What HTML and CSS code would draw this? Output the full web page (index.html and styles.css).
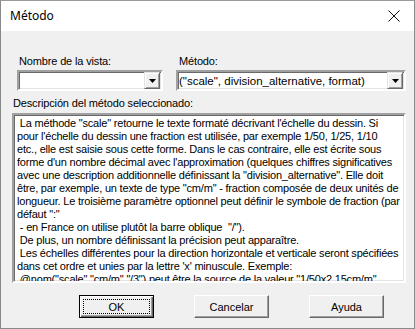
FILE: index.html
```html
<!DOCTYPE html>
<html lang="es">
<head>
<meta charset="utf-8">
<title>Método</title>
<link rel="stylesheet" href="styles.css">
</head>
<body>
<div class="window">
  <div class="titlebar">
    <span class="title">Método</span>
    <svg class="close" width="12" height="12" viewBox="0 0 12 12"><path d="M0.5 0.5 L11.5 11.5 M11.5 0.5 L0.5 11.5" stroke="#111" stroke-width="1" fill="none"/></svg>
  </div>
  <div class="content">
    <div class="fields">
      <div class="field field-view">
        <div class="label">Nombre de la vista:</div>
        <div class="combo">
          <span class="combo-text"></span>
          <span class="drop"><svg width="7" height="4" viewBox="0 0 7 4"><path d="M0 0 H7 L3.5 4 Z" fill="#000"/></svg></span>
        </div>
      </div>
      <div class="field field-method">
        <div class="label">Método:</div>
        <div class="combo">
          <span class="combo-text">("scale", division_alternative, format)</span>
          <span class="drop"><svg width="7" height="4" viewBox="0 0 7 4"><path d="M0 0 H7 L3.5 4 Z" fill="#000"/></svg></span>
        </div>
      </div>
    </div>
    <div class="label desc-label">Descripción del método seleccionado:</div>
    <div class="textbox"><div class="text"> La méthode "scale" retourne le texte formaté décrivant l'échelle du dessin. Si
pour l'échelle du dessin une fraction est utilisée, par exemple 1/50, 1/25, 1/10
etc., elle est saisie sous cette forme. Dans le cas contraire, elle est écrite sous
forme d'un nombre décimal avec l'approximation (quelques chiffres significatives
avec une description additionnelle définissant la "division_alternative". Elle doit
être, par exemple, un texte de type "cm/m" - fraction composée de deux unités de
longueur. Le troisième paramètre optionnel peut définir le symbole de fraction (par
défaut ":"
 - en France on utilise plutôt la barre oblique  "/").
 De plus, un nombre définissant la précision peut apparaître.
 Les échelles différentes pour la direction horizontale et verticale seront spécifiées
dans cet ordre et unies par la lettre 'x' minuscule. Exemple:
 @nom("scale","cm/m","/3") peut être la source de la valeur "1/50x2.15cm/m"</div></div>
    <div class="buttons">
      <div class="btn btn-default"><span class="focus">OK</span></div>
      <div class="btn">Cancelar</div>
      <div class="btn">Ayuda</div>
    </div>
  </div>
</div>
</body>
</html>
```
FILE: styles.css
```css
html, body {
  margin: 0;
  padding: 0;
  background: #ffffff;
}
.window {
  width: 415px;
  height: 329px;
  box-sizing: border-box;
  border: 1px solid #8a8a8a;
  border-top-color: #9a9a9a;
  display: flex;
  flex-direction: column;
  font-family: "Liberation Sans", Arial, sans-serif;
  font-size: 11px;
  color: #000;
}
.titlebar {
  height: 30px;
  background: #ffffff;
  display: flex;
  align-items: center;
  justify-content: space-between;
  padding: 0 14px 0 9px;
  flex: none;
}
.title {
  font-family: "Noto Sans", "Open Sans", sans-serif;
  font-size: 12px;
  color: #000;
  margin-top: -1px;
}
.close {
  display: block;
}
.content {
  flex: 1;
  background: #f0f0f0;
  padding: 24px 8px 0 11px;
  display: flex;
  flex-direction: column;
}
.fields {
  display: flex;
  gap: 13px;
  padding-left: 5px;
}
.field-view {
  width: 146px;
}
.field-method {
  width: 230px;
}
.label {
  height: 13px;
  line-height: 13px;
  padding-left: 2px;
  margin-bottom: 2px;
  white-space: nowrap;
  letter-spacing: -0.15px;
}
.field-method .label {
  padding-left: 3px;
}
.combo {
  height: 21px;
  box-sizing: border-box;
  background: #fff;
  border-style: solid;
  border-width: 2px;
  border-color: #a0a0a0 #ffffff #ffffff #a0a0a0;
  box-shadow: inset 1px 1px 0 #696969, inset -1px -1px 0 #e3e3e3;
  display: flex;
  align-items: center;
  padding: 0 0 0 1px;
}
.combo-text {
  flex: 1;
  white-space: nowrap;
  overflow: hidden;
  padding-left: 0;
  font-size: 11.5px;
}
.drop {
  width: 16px;
  height: 17px;
  box-sizing: border-box;
  background: #f0f0f0;
  border-style: solid;
  border-width: 1px;
  border-color: #e3e3e3 #696969 #696969 #e3e3e3;
  box-shadow: inset 1px 1px 0 #ffffff, inset -1px -1px 0 #a0a0a0;
  display: flex;
  align-items: center;
  justify-content: center;
  margin-right: 1px;
}
.drop svg {
  display: block;
  margin-top: 1px;
}
.desc-label {
  margin-top: 6px;
  margin-bottom: 3px;
  padding-left: 1px;
}
.textbox {
  height: 170px;
  width: 394px;
  box-sizing: border-box;
  background: #fff;
  border-style: solid;
  border-width: 2px;
  border-color: #a0a0a0 #ffffff #ffffff #a0a0a0;
  box-shadow: inset 1px 1px 0 #696969, inset -1px -1px 0 #e3e3e3;
  overflow: hidden;
  padding: 2px 2px 0 3px;
}
.text {
  white-space: pre;
  line-height: 13px;
  letter-spacing: -0.2px;
}
.buttons {
  display: flex;
  gap: 40px;
  padding-left: 67px;
  margin-top: 12px;
}
.btn {
  width: 75px;
  height: 23px;
  box-sizing: border-box;
  background: #f0f0f0;
  border-style: solid;
  border-width: 1px;
  border-color: #ffffff #696969 #696969 #ffffff;
  box-shadow: inset -1px -1px 0 #a0a0a0;
  display: flex;
  align-items: center;
  justify-content: center;
}
.btn-default {
  border: 1px solid #000;
  box-shadow: inset 1px 1px 0 #ffffff, inset -1px -1px 0 #696969, inset -2px -2px 0 #a0a0a0;
  padding: 3px;
}
.focus {
  flex: 1;
  align-self: stretch;
  display: flex;
  align-items: center;
  justify-content: center;
  border: 1px dotted #000;
}
```
